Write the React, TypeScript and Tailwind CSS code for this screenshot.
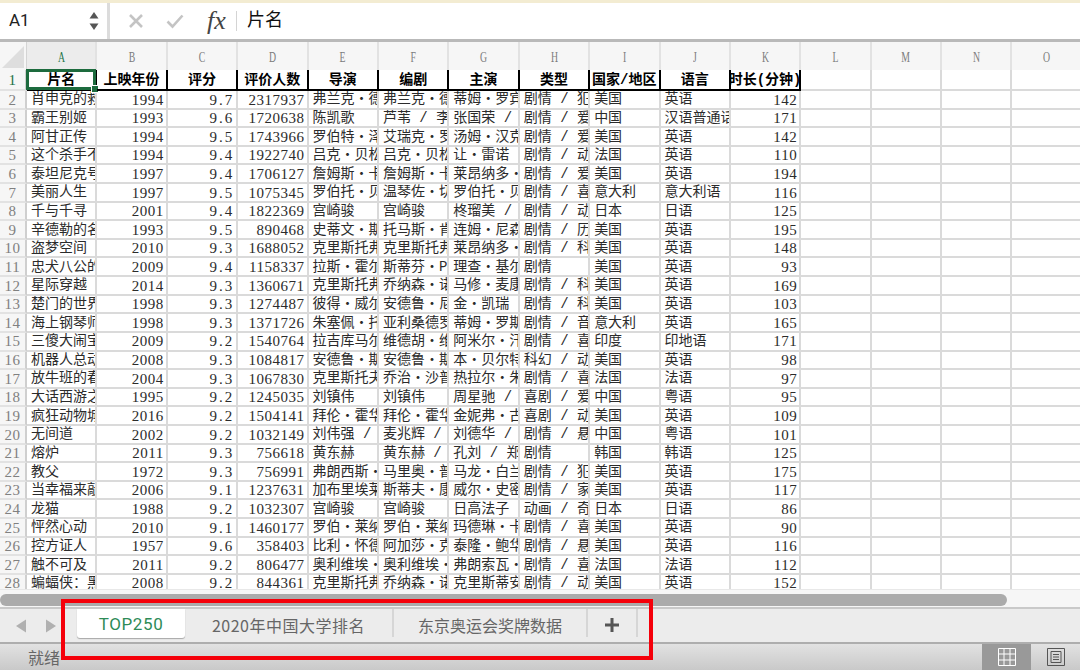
import React from 'react';

const cjk = '[font-family:"Liberation_Mono","Noto_Sans_CJK_SC",monospace]';
const serif = "font-['Liberation_Serif',serif]";

const COLUMNS = ['A', 'B', 'C', 'D', 'E', 'F', 'G', 'H', 'I', 'J', 'K', 'L', 'M', 'N', 'O'];
const HEADERS = ['片名', '上映年份', '评分', '评价人数', '导演', '编剧', '主演', '类型', '国家/地区', '语言', '时长(分钟)'];

const MOVIES: string[][] = [
  ['肖申克的救赎', '1994', '9.7', '2317937', '弗兰克・德拉邦特', '弗兰克・德拉邦特', '蒂姆・罗宾斯', '剧情 / 犯罪', '美国', '英语', '142'],
  ['霸王别姬', '1993', '9.6', '1720638', '陈凯歌', '芦苇 / 李碧华', '张国荣 / 张丰毅', '剧情 / 爱情', '中国', '汉语普通话', '171'],
  ['阿甘正传', '1994', '9.5', '1743966', '罗伯特・泽米吉斯', '艾瑞克・罗斯', '汤姆・汉克斯', '剧情 / 爱情', '美国', '英语', '142'],
  ['这个杀手不太冷', '1994', '9.4', '1922740', '吕克・贝松', '吕克・贝松', '让・雷诺', '剧情 / 动作', '法国', '英语', '110'],
  ['泰坦尼克号', '1997', '9.4', '1706127', '詹姆斯・卡梅隆', '詹姆斯・卡梅隆', '莱昂纳多・迪卡普里奥', '剧情 / 爱情', '美国', '英语', '194'],
  ['美丽人生', '1997', '9.5', '1075345', '罗伯托・贝尼尼', '温琴佐・切拉米', '罗伯托・贝尼尼', '剧情 / 喜剧', '意大利', '意大利语', '116'],
  ['千与千寻', '2001', '9.4', '1822369', '宫崎骏', '宫崎骏', '柊瑠美 / 入野自由', '剧情 / 动画', '日本', '日语', '125'],
  ['辛德勒的名单', '1993', '9.5', '890468', '史蒂文・斯皮尔伯格', '托马斯・肯尼利', '连姆・尼森', '剧情 / 历史', '美国', '英语', '195'],
  ['盗梦空间', '2010', '9.3', '1688052', '克里斯托弗・诺兰', '克里斯托弗・诺兰', '莱昂纳多・迪卡普里奥', '剧情 / 科幻', '美国', '英语', '148'],
  ['忠犬八公的故事', '2009', '9.4', '1158337', '拉斯・霍尔斯道姆', '斯蒂芬・P・林德赛', '理查・基尔', '剧情', '美国', '英语', '93'],
  ['星际穿越', '2014', '9.3', '1360671', '克里斯托弗・诺兰', '乔纳森・诺兰', '马修・麦康纳', '剧情 / 科幻', '美国', '英语', '169'],
  ['楚门的世界', '1998', '9.3', '1274487', '彼得・威尔', '安德鲁・尼科尔', '金・凯瑞', '剧情 / 科幻', '美国', '英语', '103'],
  ['海上钢琴师', '1998', '9.3', '1371726', '朱塞佩・托纳多雷', '亚利桑德罗・巴里科', '蒂姆・罗斯', '剧情 / 音乐', '意大利', '英语', '165'],
  ['三傻大闹宝莱坞', '2009', '9.2', '1540764', '拉吉库马尔・希拉尼', '维德胡・维诺德', '阿米尔・汗', '剧情 / 喜剧', '印度', '印地语', '171'],
  ['机器人总动员', '2008', '9.3', '1084817', '安德鲁・斯坦顿', '安德鲁・斯坦顿', '本・贝尔特', '科幻 / 动画', '美国', '英语', '98'],
  ['放牛班的春天', '2004', '9.3', '1067830', '克里斯托夫・巴拉蒂', '乔治・沙普', '热拉尔・朱尼奥', '剧情 / 喜剧', '法国', '法语', '97'],
  ['大话西游之大圣娶亲', '1995', '9.2', '1245035', '刘镇伟', '刘镇伟', '周星驰 / 吴孟达', '喜剧 / 爱情', '中国', '粤语', '95'],
  ['疯狂动物城', '2016', '9.2', '1504141', '拜伦・霍华德', '拜伦・霍华德', '金妮弗・古德温', '喜剧 / 动画', '美国', '英语', '109'],
  ['无间道', '2002', '9.2', '1032149', '刘伟强 / 麦兆辉', '麦兆辉 / 庄文强', '刘德华 / 梁朝伟', '剧情 / 悬疑', '中国', '粤语', '101'],
  ['熔炉', '2011', '9.3', '756618', '黄东赫', '黄东赫 / 孔枝泳', '孔刘 / 郑裕美', '剧情', '韩国', '韩语', '125'],
  ['教父', '1972', '9.3', '756991', '弗朗西斯・福特・科波拉', '马里奥・普佐', '马龙・白兰度', '剧情 / 犯罪', '美国', '英语', '175'],
  ['当幸福来敲门', '2006', '9.1', '1237631', '加布里埃莱・穆奇诺', '斯蒂夫・康拉德', '威尔・史密斯', '剧情 / 家庭', '美国', '英语', '117'],
  ['龙猫', '1988', '9.2', '1032307', '宫崎骏', '宫崎骏', '日高法子 / 坂本千夏', '动画 / 奇幻', '日本', '日语', '86'],
  ['怦然心动', '2010', '9.1', '1460177', '罗伯・莱纳', '罗伯・莱纳', '玛德琳・卡罗尔', '剧情 / 喜剧', '美国', '英语', '90'],
  ['控方证人', '1957', '9.6', '358403', '比利・怀德', '阿加莎・克里斯蒂', '泰隆・鲍华', '剧情 / 悬疑', '美国', '英语', '116'],
  ['触不可及', '2011', '9.2', '806477', '奥利维埃・纳卡什', '奥利维埃・纳卡什', '弗朗索瓦・克鲁塞', '剧情 / 喜剧', '法国', '法语', '112'],
  ['蝙蝠侠：黑暗骑士', '2008', '9.2', '844361', '克里斯托弗・诺兰', '乔纳森・诺兰', '克里斯蒂安・贝尔', '剧情 / 动作', '美国', '英语', '152'],
];

const numericClass = (c: number) => {
  if (c === 2) return `justify-end pr-[2px] ${serif} text-[15px] tracking-[2px]`;
  if (c === 1 || c === 3 || c === 10) return `justify-end pr-[2px] ${serif} text-[15px] tracking-[0.5px]`;
  return `pl-[4px] ${cjk} text-[14px]`;
};

const FormulaBar = () => (
  <div className="flex h-[36px] shrink-0 items-stretch bg-white">
    <div className="flex w-[107px] items-center justify-between pl-[9px] pr-[8px]">
      <span className="font-['Roboto',sans-serif] text-[17px] text-[#222]">A1</span>
      <svg width="10" height="24" viewBox="0 0 10 24">
        <path d="M5 3 L9.5 9.5 H0.5 Z" fill="#555" />
        <path d="M5 21 L9.5 14.5 H0.5 Z" fill="#555" />
      </svg>
    </div>
    <div className="w-[3px] bg-[#dcdcdc]" />
    <div className="flex flex-1 items-center">
      <svg className="ml-[18px]" width="16" height="16" viewBox="0 0 16 16" fill="none" stroke="#c4c4c4" strokeWidth="2.6">
        <path d="M2 2 L14 14 M14 2 L2 14" />
      </svg>
      <svg className="ml-[22px]" width="18" height="16" viewBox="0 0 18 16" fill="none" stroke="#c4c4c4" strokeWidth="2.6">
        <path d="M1.5 8.5 L6.5 13.5 L16.5 2.5" />
      </svg>
      <span className={`ml-[23px] w-[26px] ${serif} text-[26px] leading-none text-[#444] italic`}>fx</span>
      <div className="ml-[3px] h-[20px] w-[1px] bg-[#d4d4d4]" />
      <span className={`ml-[10px] ${cjk} text-[18px] text-[#111]`}>片名</span>
    </div>
  </div>
);

const ColumnHeader = () => (
  <div className="grid h-[28px] grid-cols-[27px_repeat(15,70.4px)] bg-[#f6f6f6]">
    <div className="flex items-end justify-end border-r border-[#d4d4d4] pr-[2px] pb-[2px]">
      <svg width="22" height="22" viewBox="0 0 22 22">
        <path d="M22 0 V22 H0 Z" fill="#dedede" />
      </svg>
    </div>
    {COLUMNS.map((col, i) => (
      <div
        key={col}
        className={`flex items-center justify-center border-r-2 border-[#e2e2e2] pt-[2px] ${serif} text-[15px] ${i === 0 ? 'bg-[#ececec] text-[#217346]' : 'text-[#7c7c7c]'}`}
      >
        <span className="inline-block scale-x-[0.65]">{col}</span>
      </div>
    ))}
  </div>
);

const RowHeader = ({ n, active }: { n: number; active?: boolean }) => (
  <div
    className={`flex items-center justify-center border-r-2 border-b-2 border-r-[#cfcfcf] border-b-[#e2e2e2] bg-[#f6f6f6] pt-[1px] ${serif} text-[15px] tracking-[0.5px] ${active ? 'text-[#217346]' : 'text-[#808080]'}`}
  >
    {n}
  </div>
);

const Sheet = () => (
  <div className="h-[550px] shrink-0 overflow-hidden border-t-[3px] border-[#b9b9b9] bg-white">
    <ColumnHeader />
    <div className="grid grid-cols-[27px_repeat(15,70.4px)] grid-rows-[21px] auto-rows-[18.62px]">
      <RowHeader n={1} active />
      {HEADERS.map((label, i) => (
        <div
          key={label}
          className={`relative flex items-center justify-center border-r-2 border-b-2 border-black pt-[1px] ${cjk} text-[14px] font-bold whitespace-pre text-black ${i === 10 ? 'overflow-hidden' : ''}`}
        >
          {label}
          {i === 0 && (
            <>
              <div className="absolute inset-[-1px] border-[3px] border-[#1d6b3e]" />
              <div className="absolute right-[-4px] bottom-[-4px] h-[8px] w-[8px] border border-white bg-[#1d6b3e]" />
            </>
          )}
        </div>
      ))}
      {COLUMNS.slice(11).map((col) => (
        <div key={col} className="border-r-2 border-b-2 border-[#dadada]" />
      ))}
      {MOVIES.map((movie, r) => (
        <React.Fragment key={r}>
          <RowHeader n={r + 2} />
          {movie.map((value, c) => (
            <div
              key={c}
              className={`flex items-center overflow-hidden border-r-2 border-b-2 border-[#dadada] pt-[1px] whitespace-pre text-[#2b2b2b] ${numericClass(c)}`}
            >
              {value}
            </div>
          ))}
          {COLUMNS.slice(11).map((col) => (
            <div key={col} className="border-r-2 border-b-2 border-[#dadada]" />
          ))}
        </React.Fragment>
      ))}
    </div>
  </div>
);

const Scrollbar = () => (
  <div className="flex h-[20px] shrink-0 items-center border-t border-b-2 border-t-[#e8e8e8] border-b-[#c9c9c9] bg-[#f6f6f6] pt-[3px]">
    <div className="h-[12px] w-[1007px] rounded-r-[6px] rounded-l-[6px] bg-[#ababab]" />
  </div>
);

const Tabs = () => (
  <div className="relative flex h-[35px] shrink-0 items-start border-b-2 border-[#aeaeae] bg-[#ececec] font-['Noto_Sans_CJK_SC',sans-serif] text-[16px] text-[#666]">
    <div className="flex h-full w-[77px] items-center gap-[18px] pl-[15px]">
      <svg width="12" height="14" viewBox="0 0 12 14">
        <path d="M11 0.5 V13.5 L1 7 Z" fill="#b0b0b0" />
      </svg>
      <svg width="12" height="14" viewBox="0 0 12 14">
        <path d="M1 0.5 V13.5 L11 7 Z" fill="#b0b0b0" />
      </svg>
    </div>
    <div className="flex h-[29px] w-[108px] items-center justify-center rounded-b-[3px] bg-white pt-[2px] font-['Roboto',sans-serif] text-[17px] tracking-[0.6px] text-[#2e8b57] shadow-[0_1px_1px_#a8a8a8]">
      TOP250
    </div>
    <div className="flex h-[28px] w-[209px] items-center justify-center border-r-2 border-[#d6d6d6] pt-[3px] tracking-[0.5px]">2020年中国大学排名</div>
    <div className="flex h-[28px] w-[194px] items-center justify-center border-r-2 border-[#d6d6d6] pt-[3px]">东京奥运会奖牌数据</div>
    <div className="flex h-[28px] w-[50px] items-center justify-center border-r-2 border-[#d6d6d6] pt-[3px]">
      <svg width="14" height="14" viewBox="0 0 14 14" fill="none" stroke="#555" strokeWidth="3">
        <path d="M7 0 V14 M0 7 H14" />
      </svg>
    </div>
  </div>
);

const StatusBar = () => (
  <div className="flex flex-1 items-stretch justify-between bg-gradient-to-b from-[#e2e2e2] to-[#c9c9c9]">
    <span className="flex items-center pl-[28px] font-['Noto_Sans_CJK_SC',sans-serif] text-[16px] text-[#666]">就绪</span>
    <div className="flex">
      <div className="flex w-[49px] items-center justify-center bg-[#999]">
        <svg width="18" height="18" viewBox="0 0 18 18" fill="none" stroke="#fff" strokeWidth="1">
          <path d="M.5.5 H17.5 V17.5 H.5 Z M.5 6 H17.5 M.5 12 H17.5 M6 .5 V17.5 M12 .5 V17.5" />
        </svg>
      </div>
      <div className="flex w-[49px] items-center justify-center">
        <svg width="18" height="18" viewBox="0 0 18 18" fill="none" stroke="#555" strokeWidth="1">
          <path d="M.5.5 H17.5 V17.5 H.5 Z M4 3.5 H14 V14.5 H4 Z M6 6.5 H12 M6 9 H12 M6 11.5 H12" />
        </svg>
      </div>
    </div>
  </div>
);

const App = () => (
  <div className="relative flex h-[670px] w-[1080px] flex-col overflow-hidden bg-white">
    <div className="h-[3px] shrink-0 bg-[#f3ecd2]" />
    <FormulaBar />
    <Sheet />
    <Scrollbar />
    <Tabs />
    <StatusBar />
    {/* annotation box drawn over the tab strip */}
    <div className="absolute top-[599px] left-[61px] h-[61px] w-[592px] border-4 border-[#f5000a]" />
  </div>
);

export default App;
